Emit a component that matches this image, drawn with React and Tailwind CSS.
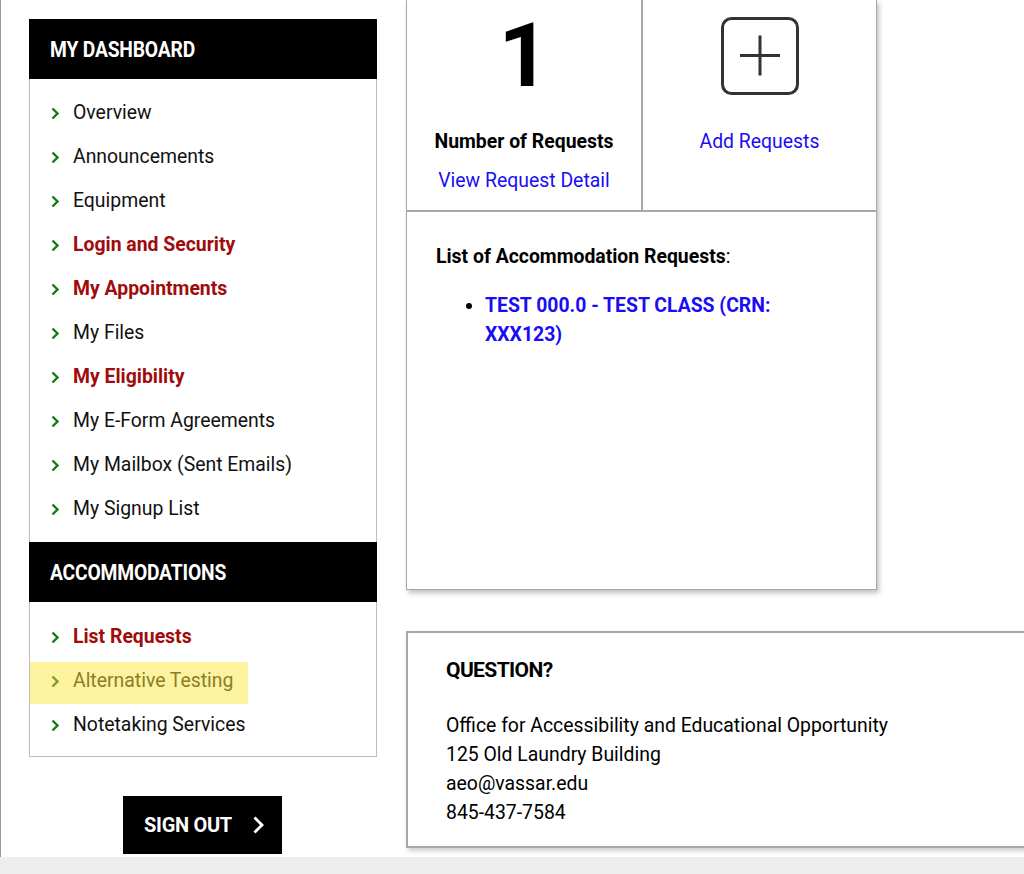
const dashboard = [
  { label: "Overview" },
  { label: "Announcements" },
  { label: "Equipment" },
  { label: "Login and Security", alert: true },
  { label: "My Appointments", alert: true },
  { label: "My Files" },
  { label: "My Eligibility", alert: true },
  { label: "My E-Form Agreements" },
  { label: "My Mailbox (Sent Emails)" },
  { label: "My Signup List" },
];

const accommodations = [
  { label: "List Requests", alert: true },
  { label: "Alternative Testing", highlight: true },
  { label: "Notetaking Services" },
];

function Chevron({ className }) {
  return (
    <svg width="9" height="13" viewBox="0 0 9 13" className={className}>
      <path d="M1.5 1.5 L6.5 6.5 L1.5 11.5" fill="none" stroke="currentColor" strokeWidth="2.4" />
    </svg>
  );
}

function MenuHeader({ children }) {
  return (
    <div className="flex h-[60px] items-center bg-black px-[21px] text-[22px] font-bold tracking-[-0.2px] text-white">
      <span className="inline-block origin-left scale-x-[0.875]">{children}</span>
    </div>
  );
}

function MenuList({ items, pt, pb }) {
  return (
    <ul className={`border-x border-[#bdbdbd] ${pt} ${pb}`}>
      {items.map((item) => (
        <li key={item.label} className="relative flex h-[44px] items-center gap-[13px] pl-[21px] text-[19.4px]">
          {item.highlight && <div className="absolute left-0 top-[3px] h-[42px] w-[218px] bg-[#fdf29e]" />}
          <Chevron className={`relative ${item.highlight ? "text-[#7f9a2a]" : "text-[#137a13]"}`} />
          <span
            className={`relative ${
              item.alert
                ? "font-bold text-[#a00b0b]"
                : item.highlight
                ? "text-[#8a7d2c]"
                : "text-[#111]"
            }`}
          >
            {item.label}
          </span>
        </li>
      ))}
    </ul>
  );
}

export default function App() {
  return (
    <div className="flex h-[874px] w-[1024px] flex-col overflow-hidden bg-white [font-family:'Roboto',sans-serif]">
      <div className="flex flex-1 border-l border-[#9a9a9a]">
        <aside className="ml-[28px] mt-[19px] flex w-[348px] shrink-0 flex-col">
          <MenuHeader>MY DASHBOARD</MenuHeader>
          <MenuList items={dashboard} pt="pt-[12px]" pb="pb-[11px]" />
          <MenuHeader>ACCOMMODATIONS</MenuHeader>
          <div className="border-b border-[#bdbdbd]">
            <MenuList items={accommodations} pt="pt-[13px]" pb="pb-[9px]" />
          </div>
          <div className="mt-[39px] flex justify-center">
            <button className="ml-[-1px] flex h-[58px] w-[159px] items-center justify-center gap-[20px] bg-black pl-[4px] text-[20px] font-bold tracking-[-0.3px] text-white">
              <span className="inline-block">SIGN OUT</span>
              <svg width="13" height="20" viewBox="0 0 13 20">
                <path d="M2.5 2.5 L10 10 L2.5 17.5" fill="none" stroke="white" strokeWidth="2.8" />
              </svg>
            </button>
          </div>
        </aside>

        <main className="ml-[29px] flex flex-col">
          <section className="w-[471px] border-x border-b border-[#a8a8a8] shadow-[2px_3px_5px_rgba(0,0,0,0.25)]">
            <div className="flex h-[212px] border-b-2 border-[#a8a8a8]">
              <div className="flex w-[236px] flex-col items-center border-r-2 border-[#a8a8a8]">
                <div className="mt-[8px] text-[89px] font-bold leading-[96px] text-black">1</div>
                <div className="mt-[26px] text-[19.4px] font-bold leading-[24px] text-black">Number of Requests</div>
                <a className="mt-[15px] text-[19.4px] leading-[24px] text-[#1a0df5]">View Request Detail</a>
              </div>
              <div className="flex flex-1 flex-col items-center">
                <svg className="mt-[16px]" width="80" height="80" viewBox="0 0 80 80">
                  <rect x="2.5" y="2.5" width="75" height="75" rx="9" fill="none" stroke="#333" strokeWidth="3" />
                  <path d="M20 39.5 H60 M40 19.5 V59.5" stroke="#333" strokeWidth="3" />
                </svg>
                <a className="mt-[34px] text-[19.4px] leading-[24px] text-[#1a0df5]">Add Requests</a>
              </div>
            </div>
            <div className="h-[377px] px-[29px] pt-[33px]">
              <p className="text-[19.4px] leading-[24px] text-black">
                <span className="font-bold">List of Accommodation Requests</span>:
              </p>
              <ul className="mt-[22px] list-disc pl-[49px] marker:text-black">
                <li className="pr-[40px] text-[19.4px] font-bold leading-[29px] text-[#1a0df5]">
                  TEST 000.0 - TEST CLASS (CRN: XXX123)
                </li>
              </ul>
            </div>
          </section>

          <section className="mt-[41px] h-[217px] w-[660px] border-2 border-[#a8a8a8] px-[38px] pt-[22px] shadow-[2px_3px_5px_rgba(0,0,0,0.2)]">
            <h2 className="text-[21px] font-bold tracking-[-0.6px] text-black">QUESTION?</h2>
            <div className="mt-[24px] text-[19.4px] leading-[29px] text-black">
              <p>Office for Accessibility and Educational Opportunity</p>
              <p>125 Old Laundry Building</p>
              <p>aeo@vassar.edu</p>
              <p>845-437-7584</p>
            </div>
          </section>
        </main>
      </div>
      <div className="h-[17px] bg-[#eeeeee]" />
    </div>
  );
}
